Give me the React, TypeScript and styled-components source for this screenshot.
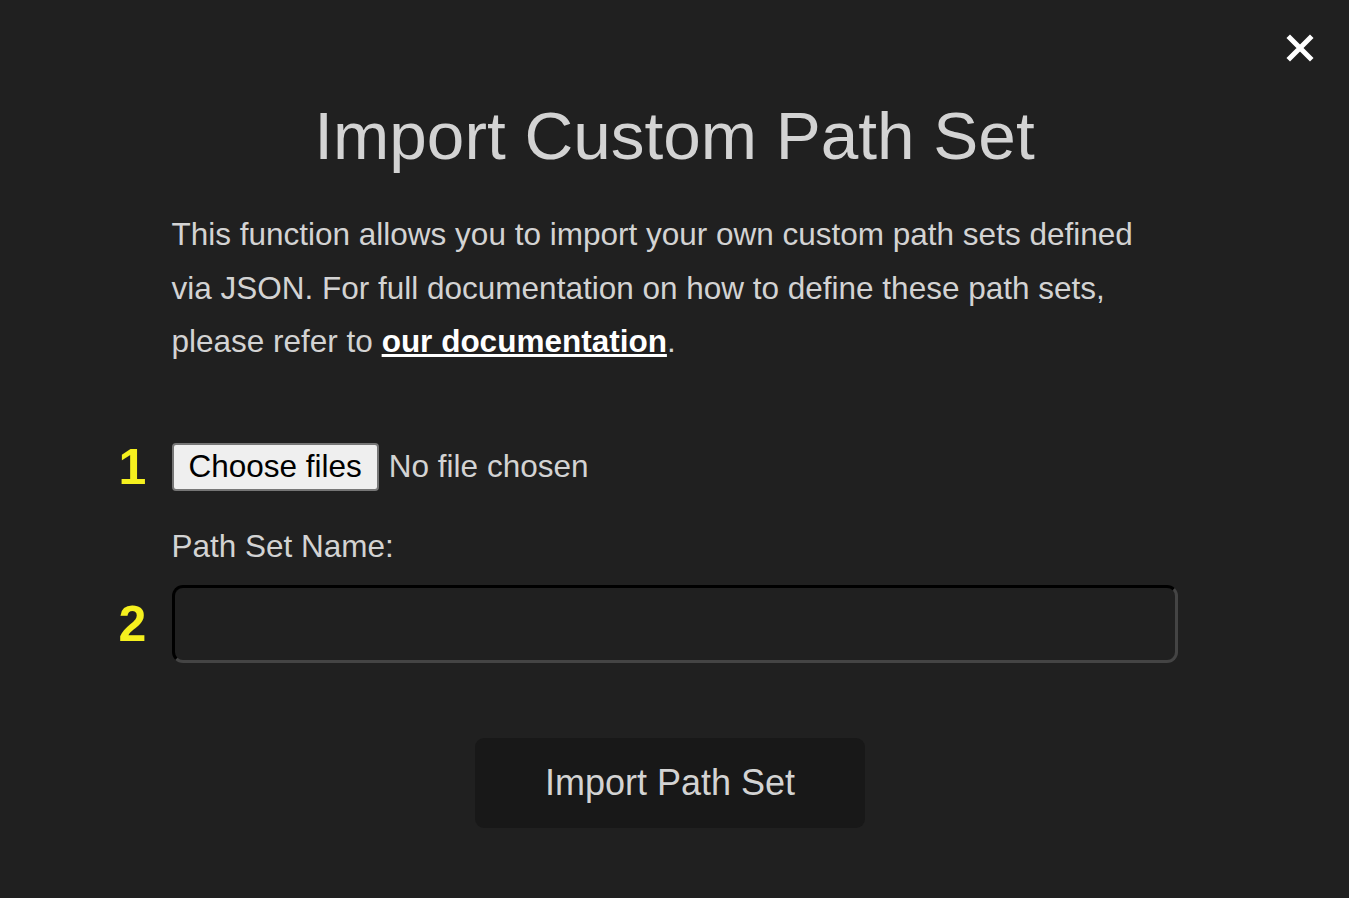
import React from "react";
import styled, { createGlobalStyle } from "styled-components";

const Global = createGlobalStyle`
  html, body { margin: 0; padding: 0; background: #202020; }
  body { font-family: "Liberation Sans", Arial, sans-serif; color: #d3d3d3; }
`;

const Page = styled.div`
  position: relative;
  min-height: 898px;
  background: #202020;
  padding-top: 92px;
  box-sizing: border-box;
`;

const Close = styled.button`
  position: absolute;
  top: 33px;
  right: 34px;
  width: 30px;
  height: 30px;
  padding: 0;
  border: none;
  background: transparent;
  cursor: pointer;
  display: flex;
  align-items: center;
  justify-content: center;
`;

const Title = styled.h1`
  margin: 0;
  text-align: center;
  font-weight: 400;
  font-size: 67.5px;
  line-height: 88px;
  color: #d3d3d3;
`;

const Body = styled.div`
  width: 1006px;
  margin: 0 auto;
`;

const Para = styled.p`
  margin: 28px 0 0;
  font-size: 31.5px;
  line-height: 53.5px;
  color: #d3d3d3;
`;

const DocLink = styled.a`
  color: #ffffff;
  font-weight: 700;
  text-decoration: underline;
`;

const Step = styled.div<{ $top: number }>`
  position: relative;
  margin-top: ${(p) => p.$top}px;
  display: flex;
  align-items: center;
`;

const StepNum = styled.span`
  position: absolute;
  left: -53px;
  top: 50%;
  transform: translateY(-50%);
  font-size: 50px;
  font-weight: 700;
  color: #f5f01e;
`;

const FileButton = styled.button`
  font-family: "Liberation Sans", Arial, sans-serif;
  font-size: 31.5px;
  height: 48px;
  padding: 0 15px;
  background: #efefef;
  color: #000;
  border: 2px solid #767676;
  border-radius: 4px;
  box-sizing: border-box;
`;

const FileText = styled.span`
  margin-left: 10px;
  font-size: 31.5px;
  color: #d3d3d3;
`;

const Label = styled.label`
  display: block;
  margin-top: 38px;
  font-size: 31.5px;
  line-height: 34px;
  color: #d3d3d3;
`;

const NameInput = styled.input`
  width: 1006px;
  height: 78px;
  box-sizing: border-box;
  background: #202020;
  border: 3px inset #444;
  border-top-color: #000;
  border-left-color: #000;
  border-radius: 11px;
  font-size: 31.5px;
  color: #d3d3d3;
  padding: 0 14px;
  outline: none;
`;

const Actions = styled.div`
  display: flex;
  justify-content: center;
  margin-top: 75px;
  padding-right: 9px;
`;

const Submit = styled.button`
  width: 390px;
  height: 90px;
  background: #181818;
  border: none;
  border-radius: 9px;
  font-family: "Liberation Sans", Arial, sans-serif;
  font-size: 36px;
  color: #d3d3d3;
  cursor: pointer;
`;

export default function App() {
  return (
    <>
      <Global />
      <Page>
        <Close aria-label="Close">
          <svg width="28" height="28" viewBox="0 0 28 28">
            <path d="M4 4 L24 24 M24 4 L4 24" stroke="#fff" strokeWidth="5" strokeLinecap="square" />
          </svg>
        </Close>
        <Title>Import Custom Path Set</Title>
        <Body>
          <Para>
            This function allows you to import your own custom path sets defined via JSON. For full
            documentation on how to define these path sets, please refer to{" "}
            <DocLink href="#">our documentation</DocLink>.
          </Para>
          <Step $top={74}>
            <StepNum>1</StepNum>
            <FileButton type="button">Choose files</FileButton>
            <FileText>No file chosen</FileText>
          </Step>
          <Label htmlFor="psname">Path Set Name:</Label>
          <Step $top={22}>
            <StepNum>2</StepNum>
            <NameInput id="psname" type="text" />
          </Step>
          <Actions>
            <Submit type="button">Import Path Set</Submit>
          </Actions>
        </Body>
      </Page>
    </>
  );
}
